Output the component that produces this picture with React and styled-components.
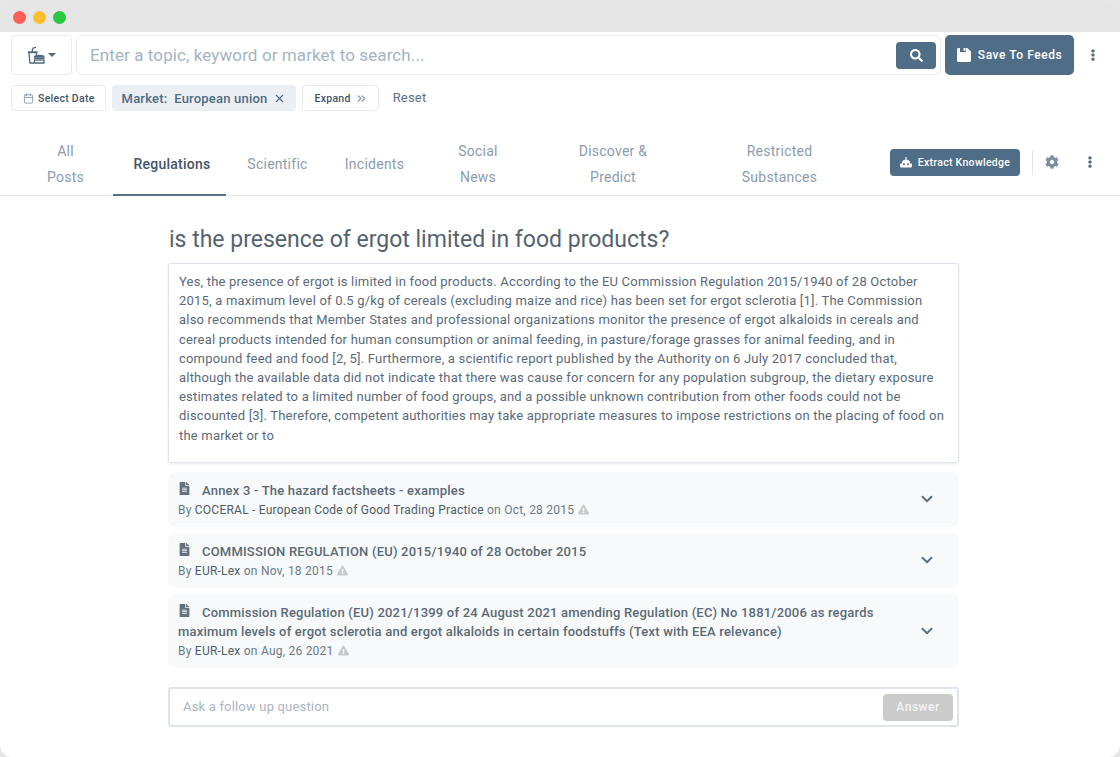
import React from 'react';
import styled, { createGlobalStyle } from 'styled-components';
import { FaSearch, FaCog, FaFileAlt, FaExclamationTriangle, FaEllipsisV } from 'react-icons/fa';
import { LuCalendar, LuChevronsRight, LuChevronDown, LuX } from 'react-icons/lu';

const Global = createGlobalStyle`
  html, body { margin: 0; padding: 0; background: #e6e6e6; }
  body { font-family: Roboto, "Liberation Sans", sans-serif; }
  * { box-sizing: border-box; }
`;
const Win = styled.div`
  width: 1120px; height: 757px; background: #fff; border-radius: 12px; overflow: hidden;
  display: flex; flex-direction: column;
`;
const TitleBar = styled.div`
  height: 32px; background: #e6e6e6; display: flex; align-items: center; gap: 7px; padding: 2px 0 0 13px; flex: none;
`;
const Dot = styled.span`
  width: 13px; height: 13px; border-radius: 50%; background: ${p => p.$c};
`;
const SearchRow = styled.div`
  display: flex; align-items: center; padding: 3px 0 0 11px; height: 43px; flex: none;
`;
const TypeButton = styled.div`
  width: 61px; height: 40px; border: 1px solid #e8ecf1; border-radius: 4px; display: flex; align-items: center;
  justify-content: center; gap: 3px; color: #4f6a83; margin-right: 4px;
`;
const Caret = styled.span`
  width: 0; height: 0; border-left: 4px solid transparent; border-right: 4px solid transparent; border-top: 4px solid #4f6a83;
`;
const SearchBox = styled.div`
  width: 865px; height: 40px; border: 1px solid #e8ecf1; border-radius: 6px; display: flex; align-items: center;
  justify-content: space-between; padding: 0 4px 0 13px;
`;
const Placeholder = styled.span`
  font-size: 17px; color: #a5b3c1; letter-spacing: 0.1px;
`;
const SearchBtn = styled.div`
  width: 40px; height: 27px; border-radius: 4px; background: #4f6d87; color: #fff; display: flex; align-items: center; justify-content: center; font-size: 13px;
`;
const SaveBtn = styled.div`
  width: 129px; height: 40px; margin-left: 4px; border-radius: 5px; background: #4f6d87; color: #fff; display: flex; align-items: center;
  justify-content: center; gap: 7px; font-size: 12px; font-weight: 500; letter-spacing: 0.55px;
`;
const Kebab = styled.div`
  color: #5a6c80; display: flex; align-items: center; justify-content: center; font-size: 12px; width: ${p => p.$w || 38}px;
`;
const FilterRow = styled.div`
  display: flex; align-items: flex-start; gap: 6px; padding: 10px 0 0 11px; height: 43px; flex: none;
`;
const OutlineBtn = styled.div`
  height: 26px; padding: 0 10px 0 11px; border: 1px solid #e6eaef; border-radius: 4px; display: flex; align-items: center; gap: 4px;
  font-size: 10.5px; font-weight: 500; color: #3f5366; letter-spacing: 0.28px; background: #fff;
`;
const Chip = styled.div`
  height: 26px; padding: 0 10px; background: #ebeff3; border-radius: 4px; display: flex; align-items: center; gap: 6px;
  font-size: 13px; font-weight: 500; color: #4f6a83; letter-spacing: 0.2px;
`;
const ResetLink = styled.span`
  margin-left: 8px; font-size: 13px; line-height: 26px; color: #5c6f81; letter-spacing: 0.2px;
`;
const TabBar = styled.div`
  margin-top: 13px; height: 65px; border-bottom: 1px solid #e3e7ec; display: flex; align-items: stretch; padding-left: 18px; flex: none;
`;
const Tab = styled.div`
  width: ${p => p.$w}px; text-align: center; font-size: 14px; line-height: 26px; letter-spacing: 0.25px; padding-top: ${p => p.$two ? 7 : 20}px;
  padding-left: ${p => p.$active ? 5 : 0}px;
  color: ${p => p.$active ? '#415468' : '#8b9cad'}; font-weight: ${p => p.$active ? 500 : 400};
  border-bottom: ${p => p.$active ? '2px solid #567189' : 'none'}; height: ${p => p.$active ? 65 : 64}px; flex: none;
`;
const TabActions = styled.div`
  display: flex; align-items: center; margin-left: 21px; padding-bottom: 2px;
`;
const ExtractBtn = styled.div`
  width: 130px; height: 27px; background: #4f6d87; border-radius: 4px; color: #fff; display: flex; align-items: center; justify-content: center; gap: 6px;
  font-size: 10.5px; font-weight: 500; letter-spacing: 0.3px;
`;
const Divider = styled.span`
  width: 1px; height: 25px; background: #e3e7ec; margin: 0 12px;
`;
const GearIcon = styled.span`
  color: #7d8fa1; font-size: 14px; display: flex; width: 14px;
`;
const Main = styled.div`
  width: 791px; margin-left: 168px; display: flex; flex-direction: column;
`;
const Question = styled.h1`
  margin: 29px 0 8px; padding-left: 1px; font-size: 23px; line-height: 30px; font-weight: 400; color: #55636f;
`;
const AnswerCard = styled.div`
  height: 200px; border: 1px solid #dfe4ea; border-radius: 3px; padding: 8px 10px; font-size: 13px; letter-spacing: 0.2px; line-height: 19.2px; color: #5a6a78;
  box-shadow: 0 1px 3px rgba(80,100,120,0.12);
`;
const SourceList = styled.div`
  display: flex; flex-direction: column; gap: 6px; margin-top: 9px;
`;
const Source = styled.div`
  background: #f8f9fa; border-radius: 8px; padding: 9px 23px 7px 10px; display: flex; align-items: center; justify-content: space-between;
`;
const SourceBody = styled.div`
  width: 718px;
`;
const SourceTitle = styled.div`
  font-size: 13px; line-height: 19px; font-weight: 500; color: #5b6a75; letter-spacing: 0.2px;
  svg { color: #65727d; font-size: 13px; margin-right: 11px; vertical-align: 0; }
`;
const SourceMeta = styled.div`
  font-size: 12px; line-height: 19px; margin-top: 1px; color: #6b7a88; letter-spacing: 0.23px;
  b { font-weight: 400; color: #4e5c68; }
  svg { color: #c6c9cd; font-size: 11px; margin-left: 4px; vertical-align: -1px; }
`;
const Chevron = styled.span`
  display: flex; color: #5c6f81; font-size: 18px; padding-bottom: 3px;
  svg { stroke-width: 2.5; }
`;
const AskBox = styled.div`
  height: 40px; margin-top: 19px; border: 2px solid #dfe4ea; border-radius: 3px; display: flex; align-items: center; justify-content: space-between; padding: 0 4px 0 13px;
`;
const AskPlaceholder = styled.span`
  font-size: 13px; color: #a9b5c1; letter-spacing: 0.18px; padding-bottom: 2px;
`;
const AnswerBtn = styled.div`
  width: 70px; height: 27px; border-radius: 4px; background: #cbcbcb; color: #f3f3f3; display: flex; align-items: center; justify-content: center;
  font-size: 12px; font-weight: 500; letter-spacing: 0.5px;
`;

const FoodIcon = () => (
  <svg width="18" height="18" viewBox="0 0 18 18" fill="none" stroke="#4f6a83" strokeWidth="1.3">
    <path d="M1 6.2h9.5" strokeWidth="2" />
    <path d="M5 5.5 6 2.2l3-1" />
    <path d="M2 7l.9 10H7" />
    <path d="M9.5 7l-.2 2" />
    <path d="M7.5 11c0-2 9.5-2 9.5 0z" fill="#4f6a83" />
    <path d="M7 12.5h10.5" />
    <path d="M7.5 14.2h9.5v2.8H7.5z" />
  </svg>
);
const SaveGlyph = () => (
  <svg width="14" height="14" viewBox="0 0 14 14" fill="#fff">
    <path d="M1.5 0H3v4h6V0h1.2L14 3.5V12.5A1.5 1.5 0 0 1 12.5 14h-11A1.5 1.5 0 0 1 0 12.5v-11A1.5 1.5 0 0 1 1.5 0z" />
    <path d="M6.5 0H8.5V2.8H6.5z" />
  </svg>
);
const BotGlyph = () => (
  <svg width="12" height="11" viewBox="0 0 12 11">
    <path d="M6 0a.8.8 0 0 1 .5 1.4V2.6A4.2 4.2 0 0 1 10.2 6.5H11A1 1 0 0 1 12 7.5V9A1.5 1.5 0 0 1 10.5 10.5H1.5A1.5 1.5 0 0 1 0 9V7.5A1 1 0 0 1 1 6.5H1.8A4.2 4.2 0 0 1 5.5 2.6V1.4A.8.8 0 0 1 6 0z" fill="#fff" />
    <circle cx="4" cy="7.3" r="1" fill="#4f6d87" />
    <circle cx="8" cy="7.3" r="1" fill="#4f6d87" />
  </svg>
);

const sources = [
  { t: 'Annex 3 - The hazard factsheets - examples', by: 'COCERAL - European Code of Good Trading Practice', d: 'Oct, 28 2015' },
  { t: 'COMMISSION REGULATION (EU) 2015/1940 of 28 October 2015', by: 'EUR-Lex', d: 'Nov, 18 2015' },
  { t: 'Commission Regulation (EU) 2021/1399 of 24 August 2021 amending Regulation (EC) No 1881/2006 as regards maximum levels of ergot sclerotia and ergot alkaloids in certain foodstuffs (Text with EEA relevance)', by: 'EUR-Lex', d: 'Aug, 26 2021' },
];

export default function App() {
  return (
    <Win>
      <Global />
      <TitleBar>
        <Dot $c="#ff5f57" /><Dot $c="#febc2e" /><Dot $c="#28c840" />
      </TitleBar>
      <SearchRow>
        <TypeButton><FoodIcon /><Caret /></TypeButton>
        <SearchBox>
          <Placeholder>Enter a topic, keyword or market to search...</Placeholder>
          <SearchBtn><FaSearch /></SearchBtn>
        </SearchBox>
        <SaveBtn><SaveGlyph />Save To Feeds</SaveBtn>
        <Kebab><FaEllipsisV /></Kebab>
      </SearchRow>
      <FilterRow>
        <OutlineBtn><LuCalendar size={11} color="#8a99a8" />Select Date</OutlineBtn>
        <Chip>Market:&nbsp; European union <LuX size={13} /></Chip>
        <OutlineBtn>Expand <LuChevronsRight size={13} color="#7d8fa1" /></OutlineBtn>
        <ResetLink>Reset</ResetLink>
      </FilterRow>
      <TabBar>
        <Tab $w={95} $two>All<br />Posts</Tab>
        <Tab $w={113} $active>Regulations</Tab>
        <Tab $w={103}>Scientific</Tab>
        <Tab $w={91}>Incidents</Tab>
        <Tab $w={116} $two>Social<br />News</Tab>
        <Tab $w={154} $two>Discover &amp;<br />Predict</Tab>
        <Tab $w={179} $two>Restricted<br />Substances</Tab>
        <TabActions>
          <ExtractBtn><BotGlyph />Extract Knowledge</ExtractBtn>
          <Divider />
          <GearIcon><FaCog /></GearIcon>
          <Kebab $w={62}><FaEllipsisV /></Kebab>
        </TabActions>
      </TabBar>
      <Main>
        <Question>is the presence of ergot limited in food products?</Question>
        <AnswerCard>
          Yes, the presence of ergot is limited in food products. According to the EU Commission Regulation 2015/1940 of 28 October 2015, a maximum level of 0.5 g/kg of cereals (excluding maize and rice) has been set for ergot sclerotia [1]. The Commission also recommends that Member States and professional organizations monitor the presence of ergot alkaloids in cereals and cereal products intended for human consumption or animal feeding, in pasture/forage grasses for animal feeding, and in compound feed and food [2, 5]. Furthermore, a scientific report published by the Authority on 6 July 2017 concluded that, although the available data did not indicate that there was cause for concern for any population subgroup, the dietary exposure estimates related to a limited number of food groups, and a possible unknown contribution from other foods could not be discounted [3]. Therefore, competent authorities may take appropriate measures to impose restrictions on the placing of food on the market or to
        </AnswerCard>
        <SourceList>
          {sources.map(s => (
            <Source key={s.t}>
              <SourceBody>
                <SourceTitle><FaFileAlt />{s.t}</SourceTitle>
                <SourceMeta>By <b>{s.by}</b> on {s.d}<FaExclamationTriangle /></SourceMeta>
              </SourceBody>
              <Chevron><LuChevronDown /></Chevron>
            </Source>
          ))}
        </SourceList>
        <AskBox>
          <AskPlaceholder>Ask a follow up question</AskPlaceholder>
          <AnswerBtn>Answer</AnswerBtn>
        </AskBox>
      </Main>
    </Win>
  );
}
